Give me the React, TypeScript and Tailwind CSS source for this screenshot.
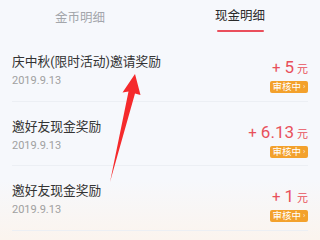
import React from "react";

type Record = {
  id: number;
  title: string;
  date: string;
  amount: string;
};

const RECORDS: Record[] = [
  { id: 1, title: "庆中秋(限时活动)邀请奖励", date: "2019.9.13", amount: "5" },
  { id: 2, title: "邀好友现金奖励", date: "2019.9.13", amount: "6.13" },
  { id: 3, title: "邀好友现金奖励", date: "2019.9.13", amount: "1" },
];

const CJK = "font-['Roboto','Noto_Sans_CJK_SC',sans-serif]";

function Row({ item }: { item: Record }) {
  return (
    <div className="flex h-[64.5px] border-b border-[#eceff4] mx-3">
      <div className="flex flex-1 flex-col pt-[16px]">
        <p className="text-[12.75px] leading-[18px] text-[#333333]">{item.title}</p>
        <p className="mt-[2px] text-[11px] leading-[16px] text-[#a0a0a0]">{item.date}</p>
      </div>
      <div className="flex flex-col items-end pt-[22px]">
        <p className="flex items-baseline leading-[16px] text-[#e8505b]">
          <span className="text-[15px]">+</span>
          <span className="ml-[4px] text-[17px]">{item.amount}</span>
          <span className="ml-[3px] text-[11px]">元</span>
        </p>
        <span className="mt-[3px] flex h-[12px] w-[38px] items-center justify-center rounded-[2px] bg-[#f3a12c] text-[9.5px] leading-none text-white">
          审核中<span className="ml-[2px] text-[8px] opacity-80">›</span>
        </span>
      </div>
    </div>
  );
}

export default function App() {
  return (
    <div className={`relative h-[240px] w-[320px] overflow-hidden bg-[#f6f8fc] ${CJK}`}>
      <div className="pointer-events-none absolute inset-x-0 bottom-0 h-[60px] bg-gradient-to-t from-[#fbf4ee] to-transparent" />
      <div className="relative grid h-[37px] grid-cols-2">
        <div className="flex items-center justify-center">
          <span className="text-[12.5px] text-[#a3a6ab]">金币明细</span>
        </div>
        <div className="flex flex-col items-center justify-center">
          <span className="mt-[2px] text-[12.5px] text-[#2a2a2a]">现金明细</span>
          <span className="mt-[4px] h-[2px] w-[47px] rounded-full bg-[#ea4f5c]" />
        </div>
      </div>
      <div className="relative">
        {RECORDS.map((r) => (
          <Row key={r.id} item={r} />
        ))}
      </div>
      <svg className="pointer-events-none absolute left-0 top-0" width="320" height="240" viewBox="0 0 320 240">
        <polygon
          points="135,74 122.5,92.5 128.5,91.5 110,182 135,93.5 140.5,95"
          fill="#f52a2c"
        />
      </svg>
    </div>
  );
}
